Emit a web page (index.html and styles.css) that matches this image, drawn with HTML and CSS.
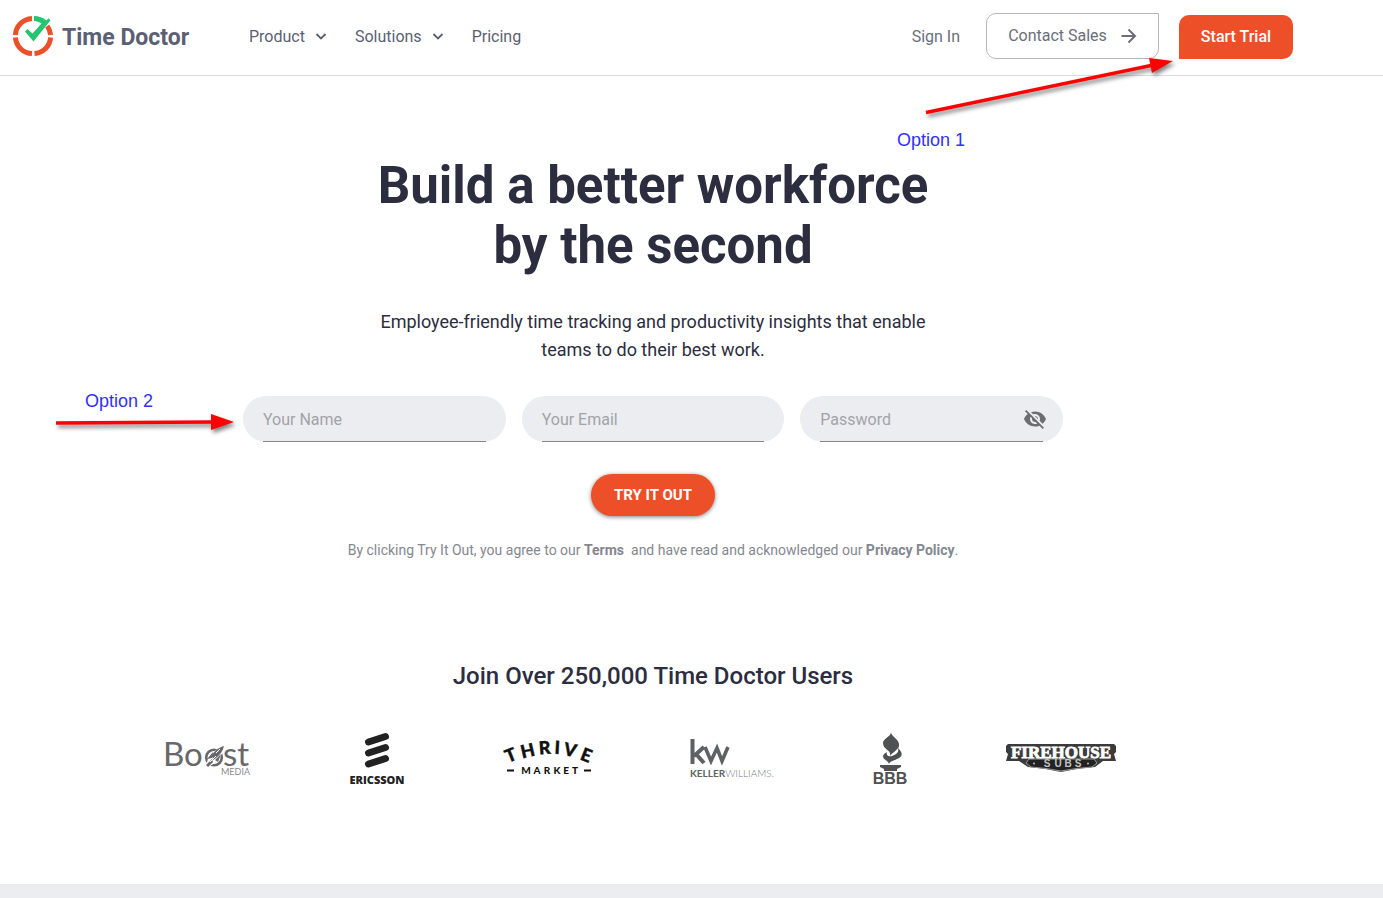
FILE: index.html
```html
<!DOCTYPE html>
<html lang="en">
<head>
<meta charset="utf-8">
<meta name="viewport" content="width=device-width, initial-scale=1">
<title>Time Doctor</title>
<link rel="stylesheet" href="styles.css">
</head>
<body>
<header class="header">
  <a class="brand" href="#">
    <svg class="brand-mark" viewBox="0 0 42 42" width="42" height="42" aria-hidden="true">
      <g fill="none" stroke="#ed5029" stroke-width="5">
        <path d="M20 3.400A17.500 17.500 0 0 0 3.400 20"/>
        <path d="M3.400 22.500A17.500 17.500 0 0 0 20 38.600"/>
        <path d="M22.500 38.600A17.500 17.500 0 0 0 38.600 22.500"/>
        <path d="M38.600 20A17.500 17.500 0 0 0 35.200 11"/>
      </g>
      <path d="M22 1C27 1 31 2.500 34.500 5.500L36.500 3.300L38.500 5.200L21.500 26.500L13 16.500L15.500 14L20.500 18.500L29.500 8.500C27 7 24.500 6 22 6Z" fill="#24c471"/>
    </svg>
    <span class="brand-name">Time Doctor</span>
  </a>
  <nav class="nav">
    <a class="nav-link" href="#">Product
      <svg viewBox="0 0 12 8" width="12" height="8" aria-hidden="true"><path d="M1.500 2L6 6.500L10.500 2" fill="none" stroke="#5b5f73" stroke-width="1.800"/></svg>
    </a>
    <a class="nav-link" href="#">Solutions
      <svg viewBox="0 0 12 8" width="12" height="8" aria-hidden="true"><path d="M1.500 2L6 6.500L10.500 2" fill="none" stroke="#5b5f73" stroke-width="1.800"/></svg>
    </a>
    <a class="nav-link" href="#">Pricing</a>
  </nav>
  <div class="actions">
    <a class="sign-in" href="#">Sign In</a>
    <button class="contact" type="button"><span>Contact Sales</span>
      <svg viewBox="0 0 16 16" width="16" height="16" aria-hidden="true"><path d="M0.500 8H14M7.500 1.500L14 8L7.500 14.500" fill="none" stroke="#6b6e7b" stroke-width="2"/></svg>
    </button>
    <button class="trial" type="button">Start Trial</button>
  </div>
</header>

<main class="main">
  <section class="hero">
    <h1 class="title">Build a better workforce<br>by the second</h1>
    <p class="lead">Employee-friendly time tracking and productivity insights that enable teams to do their best work.</p>
    <form class="signup">
      <div class="fields">
        <div class="field">
          <input class="input" type="text" placeholder="Your Name" aria-label="Your Name">
        </div>
        <div class="field">
          <input class="input" type="email" placeholder="Your Email" aria-label="Your Email">
        </div>
        <div class="field">
          <input class="input" type="password" placeholder="Password" aria-label="Password">
          <button class="reveal" type="button" aria-label="Show password">
            <svg viewBox="0 0 24 24" width="24" height="24" aria-hidden="true"><path fill="#6c6d71" d="M12 7c2.760 0 5 2.240 5 5 0 .65-.13 1.260-.36 1.830l2.920 2.920c1.510-1.260 2.700-2.890 3.430-4.750-1.730-4.390-6-7.500-11-7.500-1.400 0-2.740.25-3.980.7l2.160 2.160C10.740 7.130 11.350 7 12 7zM2 4.270l2.280 2.280.46.46C3.080 8.300 1.780 10.020 1 12c1.730 4.390 6 7.500 11 7.500 1.550 0 3.030-.3 4.380-.84l.42.42L19.730 22 21 20.730 3.270 3 2 4.270zM7.530 9.800l1.550 1.550c-.05.21-.08.43-.08.65 0 1.660 1.340 3 3 3 .22 0 .44-.03.65-.08l1.550 1.550c-.67.33-1.410.53-2.200.53-2.760 0-5-2.240-5-5 0-.79.2-1.530.53-2.200zm4.310-.78l3.150 3.150.02-.16c0-1.660-1.340-3-3-3l-.17.01z"/></svg>
          </button>
        </div>
      </div>
      <button class="submit" type="submit">TRY IT OUT</button>
      <p class="legal">By clicking Try It Out, you agree to our <a href="#">Terms</a>&nbsp; and have read and acknowledged our <a href="#">Privacy Policy</a>.</p>
    </form>
  </section>

  <section class="customers">
    <h2 class="customers-title">Join Over 250,000 Time Doctor Users</h2>
    <div class="logos">
      <svg class="logo" viewBox="0 0 120 60" width="120" height="60" role="img" aria-label="Boost Media">
        <g font-family="Lato, sans-serif" fill="#68686a">
          <text x="17" y="38" font-size="33">Bo</text>
          <text x="77" y="38" font-size="33">st</text>
          <text x="75" y="47" font-size="9" fill="#8b8b8d">MEDIA</text>
        </g>
        <circle cx="68" cy="29.500" r="7.800" fill="none" stroke="#68686a" stroke-width="2.600"/>
        <path d="M61 38C60 30 66 23 79 17C77 27 71 34 64 38Z" fill="#fff"/>
        <path d="M66 27C69 22 74 19 78 18C77 23 74 27 70 30L67 32ZM61 31L67 24L66 30ZM69 32L75 26L72 34ZM60 37L66 31L67 34L62 39Z" fill="#68686a"/>
        <path d="M70 25L74 21M64 34L70 28" stroke="#fff" stroke-width="1"/>
      </svg>
      <svg class="logo" viewBox="0 0 120 60" width="120" height="60" role="img" aria-label="Ericsson">
        <path d="M51.500 14L68.500 8.500M51.500 25L68.500 19.500M51.500 36L68.500 30.500" stroke="#222" stroke-width="7" stroke-linecap="round"/>
        <text x="60" y="56" text-anchor="middle" font-family="Open Sans, sans-serif" font-weight="800" font-size="11" fill="#222">ERICSSON</text>
      </svg>
      <svg class="logo" viewBox="0 0 120 60" width="120" height="60" role="img" aria-label="Thrive Market">
        <g font-family="Lato, sans-serif" font-weight="900" fill="#111" stroke="#111" stroke-width="0.400" text-anchor="middle" font-size="18">
          <text transform="translate(25 33) rotate(-22)">T</text>
          <text transform="translate(41 29) rotate(-13)">H</text>
          <text transform="translate(57 26) rotate(-4)">R</text>
          <text transform="translate(69 26) rotate(3)">I</text>
          <text transform="translate(81 28) rotate(12)">V</text>
          <text transform="translate(96 33) rotate(21)">E</text>
        </g>
        <g font-family="Lato, sans-serif" font-weight="900" fill="#111" text-anchor="middle" font-size="10">
          <text x="38" y="46">M</text><text x="49" y="46">A</text><text x="59" y="46">R</text><text x="69" y="46">K</text><text x="78" y="46">E</text><text x="87" y="46">T</text>
        </g>
        <path d="M19 42.500H26M96 42.500H103" stroke="#111" stroke-width="2"/>
      </svg>
      <svg class="logo" viewBox="0 0 120 60" width="120" height="60" role="img" aria-label="Keller Williams">
        <path d="M33.500 11V36M35 28L45 19M37 26L45 35" fill="none" stroke="#606163" stroke-width="4"/>
        <path d="M46 19L52 33L58 20L63 33L69 19" fill="none" stroke="#606163" stroke-width="3.600"/>
        <text x="31" y="49" font-family="Lato, sans-serif" font-size="10" fill="#606163"><tspan font-weight="700">KELLER</tspan><tspan font-weight="300" fill="#77787a">WILLIAMS.</tspan></text>
      </svg>
      <svg class="logo" viewBox="0 0 120 60" width="120" height="60" role="img" aria-label="BBB">
        <path d="M61 4C61 9 70 11 69 18C68 22 63 24 60 28C62 22 53 22 53 15C53 10 61 9 61 4Z" fill="#505153"/>
        <path d="M68 20C74 26 72 29 67 31C63 33 60 33 59 36C58 32 53 32 53 28C54 25 56 25 57 24C56 28 59 29 62 28C67 26 69 24 68 20Z" fill="#505153"/>
        <path d="M50 37H71V39L67 41V43H54V41L50 39Z" fill="#505153"/>
        <text x="60" y="56" text-anchor="middle" font-family="Liberation Sans, sans-serif" font-weight="700" font-size="16" fill="#505153">BBB</text>
      </svg>
      <svg class="logo" viewBox="0 0 120 60" width="120" height="60" role="img" aria-label="Firehouse Subs">
        <path d="M7 16H113L115 18V24L113 26L115 33H102L94 39Q77 40 60 44Q43 40 27 39L18 33H5L7 26L5 24V18Z" fill="#3b3b3b"/>
        <path d="M28 31H93L96 35L91 39Q75 40 60 43Q45 40 30 39L25 35Z" fill="#222" stroke="#999" stroke-width="1"/>
        <text x="60" y="30" text-anchor="middle" font-family="Liberation Serif, serif" font-weight="700" font-size="17" fill="#fff" stroke="#fff" stroke-width="0.800">FIREHOUSE</text>
        <g font-family="Liberation Sans, sans-serif" font-weight="700" font-size="10" fill="#c4c4c4" text-anchor="middle">
          <text x="46" y="39">S</text><text x="57" y="39">U</text><text x="67" y="39">B</text><text x="77" y="39">S</text>
        </g>
        <circle cx="33" cy="35.500" r="1" fill="#bbb"/><circle cx="87" cy="35.500" r="1" fill="#bbb"/>
      </svg>
    </div>
  </section>
</main>
<footer class="band"></footer>

<div class="note note-one">
  <svg class="arrow" viewBox="0 0 260 70" width="260" height="70" aria-hidden="true"><path d="M9 61.500L234 14.500" stroke="#f00" stroke-width="3.500"/><path d="M232 7L256 10L235 22Z" fill="#f00"/></svg>
  <span>Option 1</span>
</div>
<div class="note note-two">
  <span>Option 2</span>
  <svg class="arrow" viewBox="0 0 190 26" width="190" height="26" aria-hidden="true"><path d="M6 12L162 11" stroke="#f00" stroke-width="3.500"/><path d="M161 3L184 11L161 19Z" fill="#f00"/></svg>
</div>
</body>
</html>
```

FILE: styles.css
```css
* { box-sizing: border-box; }

body {
  margin: 0;
  min-height: 100vh;
  display: flex;
  flex-direction: column;
  position: relative;
  background: #fff;
  color: #2c2d3e;
  font-family: Roboto, sans-serif;
  font-size: 16px;
}

button, input { font: inherit; }
a { color: inherit; text-decoration: none; }
h1, h2, p { margin: 0; }

.header {
  display: flex;
  align-items: flex-end;
  padding: 13px 90px 16px 12px;
  border-bottom: 1px solid #dcdcdd;
  color: #5b5f73;
}
.brand { display: flex; align-items: center; gap: 8px; height: 46px; width: 237px; }
.brand-name { font-size: 23px; font-weight: 700; line-height: 28px; padding-top: 4px; }
.nav { display: flex; gap: 28px; height: 46px; align-items: center; }
.nav-link { display: flex; align-items: center; gap: 10px; }
.actions { display: flex; align-items: flex-end; margin-left: auto; color: #6b6e7b; }
.sign-in { line-height: 44px; margin-right: 26px; }
.contact {
  display: flex;
  align-items: center;
  justify-content: center;
  gap: 14px;
  width: 173px;
  height: 46px;
  margin-right: 20px;
  border: 1px solid #b5b6bb;
  border-radius: 10px 0 10px 10px;
  background: #fff;
  color: #6b6e7b;
}
.contact span { padding-bottom: 2px; }
.trial {
  width: 114px;
  height: 44px;
  padding: 0 0 2px;
  border: 0;
  border-radius: 10px 10px 10px 0;
  background: #ed4f29;
  color: #fff;
  font-weight: 500;
}

.main { flex: 1; padding: 80px 77px 96px 0; }
.hero { text-align: center; }
.title { font-size: 51px; line-height: 60px; font-weight: 700; }
.lead { max-width: 580px; margin: 32px auto; font-size: 18px; line-height: 28px; }
.signup { max-width: 820px; margin: 0 auto; }
.fields { display: grid; grid-template-columns: repeat(3, 1fr); gap: 16px; }
.field {
  display: flex;
  align-items: center;
  position: relative;
  height: 46px;
  padding: 0 20px;
  border-radius: 23px;
  background: #ecedf1;
}
.input {
  width: 100%;
  height: 46px;
  padding: 2px 0 0;
  border: 0;
  border-bottom: 1px solid #86878c;
  background: transparent;
  outline: 0;
}
.input::placeholder { color: #a2a3a8; opacity: 1; }
.reveal {
  position: absolute;
  right: 16px;
  display: flex;
  padding: 0;
  border: 0;
  background: none;
}
.submit {
  height: 42px;
  width: 124px;
  margin: 32px 0 24px;
  padding: 0;
  border: 0;
  border-radius: 21px;
  background: #ed4f29;
  box-shadow: 0 1px 4px rgba(0, 0, 0, 0.5);
  color: #fff;
  font-size: 15px;
  font-weight: 700;
}
.legal { font-size: 14px; line-height: 20px; color: #85878f; }
.legal a { font-weight: 700; }

.customers { margin-top: 100px; }
.customers-title { font-size: 24px; line-height: 32px; font-weight: 500; text-align: center; }
.logos {
  display: grid;
  grid-template-columns: repeat(6, 1fr);
  justify-items: center;
  max-width: 1066px;
  margin: 36px auto 0;
  padding-right: 40px;
}
.logo { display: block; }
.band { height: 14px; background: #ecedf1; }

.note {
  position: absolute;
  color: #3030ff;
  font-family: "Liberation Sans", sans-serif;
  font-size: 18px;
  line-height: 20px;
  pointer-events: none;
}
.note span { display: block; }
.arrow { display: block; filter: drop-shadow(2px 3px 2px rgba(0, 0, 0, 0.5)); }
.note-one { top: 51px; left: 917px; }
.note-one span { margin: 9px 0 0 -20px; }
.note-two { top: 391px; left: 50px; }
.note-two span { padding-left: 35px; }
```
